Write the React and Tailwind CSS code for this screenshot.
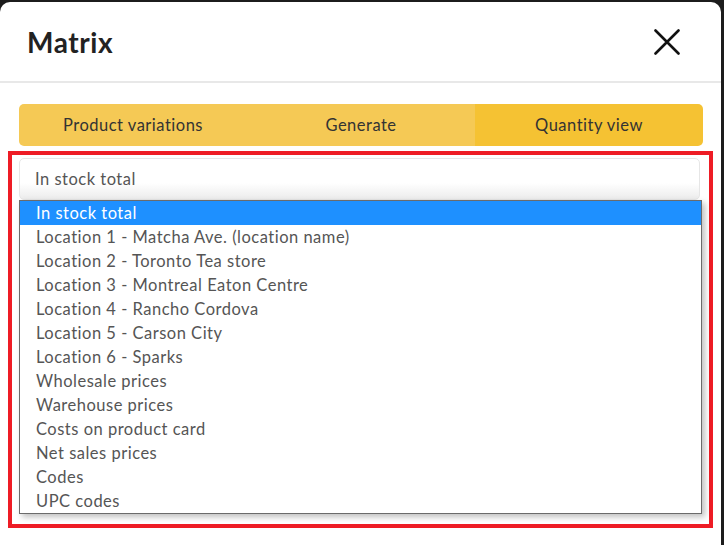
import React from "react";

const items = [
  "In stock total",
  "Location 1 - Matcha Ave. (location name)",
  "Location 2 - Toronto Tea store",
  "Location 3 - Montreal Eaton Centre",
  "Location 4 - Rancho Cordova",
  "Location 5 - Carson City",
  "Location 6 - Sparks",
  "Wholesale prices",
  "Warehouse prices",
  "Costs on product card",
  "Net sales prices",
  "Codes",
  "UPC codes",
];

export default function App() {
  return (
    <div
      className="w-[724px] h-[545px] bg-[#1c1c1c] overflow-hidden pt-[2px] pr-[3px]"
      style={{ fontFamily: "Lato, 'Open Sans', sans-serif" }}
    >
      <div className="bg-white h-[560px] rounded-t-[10px] flex flex-col">
        <div className="h-[81px] flex items-center justify-between pl-[27px] pr-[41px] border-b-2 border-[#e8e8e8] shrink-0">
          <h1 className="text-[28px] font-bold text-[#222] tracking-[0.6px]">Matrix</h1>
          <svg width="26" height="26" viewBox="0 0 26 26">
            <path d="M1.5 1.5 L24.5 24.5 M24.5 1.5 L1.5 24.5" stroke="#111" strokeWidth="2.6" strokeLinecap="round" />
          </svg>
        </div>
        <div className="pt-[21px] pl-[19px] pr-[18px]">
          <div className="flex h-[42px] rounded-[5px] overflow-hidden text-[16.5px] tracking-[0.5px] text-[#333]">
            <div className="flex-1 bg-[#f5c955] flex items-center justify-center">Product variations</div>
            <div className="flex-1 bg-[#f5c955] flex items-center justify-center">Generate</div>
            <div className="flex-1 bg-[#f5c233] flex items-center justify-center">Quantity view</div>
          </div>
        </div>
        <div className="ml-[8px] mr-[8px] mt-[5px] h-[377px] border-4 border-[#ee1c25] pt-[3px] pl-[7px] pr-[9px]">
          <div className="h-[42px] border border-[#e6e6e6] rounded-[5px] flex items-center pl-[15px] text-[16.5px] tracking-[0.5px] text-[#555] bg-gradient-to-b from-white from-60% to-[#ececec]">
            In stock total
          </div>
          <div className="w-[683px] border border-[#6b6b6b] bg-white shadow-[3px_3px_6px_rgba(0,0,0,0.25)]">
            {items.map((t, i) => (
              <div
                key={t}
                className={
                  "h-[24px] flex items-center pl-[16px] text-[16.5px] tracking-[0.5px] " +
                  (i === 0 ? "bg-[#1e90ff] text-white" : "text-[#555]")
                }
              >
                {t}
              </div>
            ))}
          </div>
        </div>
      </div>
    </div>
  );
}
